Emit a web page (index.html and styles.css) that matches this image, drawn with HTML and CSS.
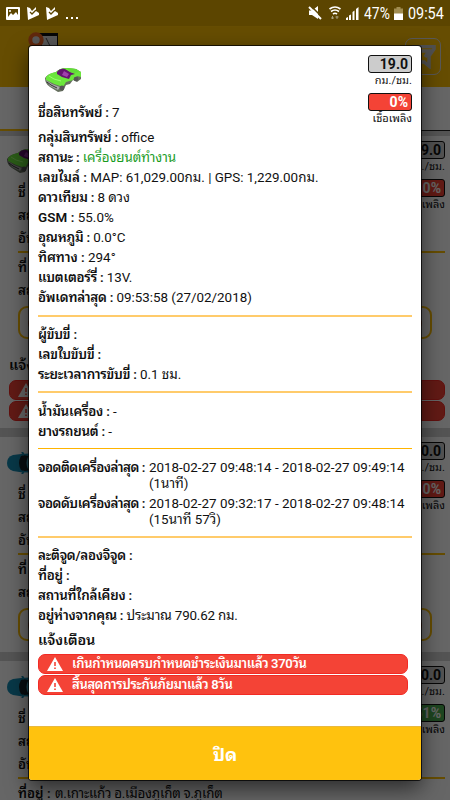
FILE: index.html
```
<!DOCTYPE html>
<html lang="th">
<head>
<meta charset="utf-8">
<title>รายละเอียดสินทรัพย์</title>
<link rel="stylesheet" href="styles.css">
</head>
<body>
<svg width="0" height="0" class="defs">
  <defs>
    <symbol id="warn" viewBox="0 0 16 14"><path d="M8 0 16 14H0Z" fill="#fff"/><path d="M7.2 5h1.6v4H7.2zM7.2 10.4h1.6V12H7.2z" fill="#f44336"/></symbol>
    <symbol id="green-car" viewBox="0 0 36 26">
      <path d="M0 11Q2 7 11 5 15 1 21 1L31 2 36 5V12L32 15 28 13 25 17 21 18 18 24 13 25 5 20Q0 17 0 11Z" fill="#66705f"/>
      <path d="M1 10Q4 6 11 5 15 1 22 1L31 2 36 5V10L32 9 28 13 21 15 18 20Q10 18 1 13Z" fill="#6be63c"/>
      <path d="M12 5Q15 1 20 2L25 5 30 7 26 8 24 12 17 10 12 7Z" fill="#651470"/>
      <path d="M22 1 31 2 34 5 29 6 25 5Z" fill="#62dc38"/>
      <path d="M19 4 24 7 22 10 17 8Z" fill="#a040ad"/>
      <path d="M1 13 7 17 15 20 13 23 5 19Z" fill="#aaa"/>
      <path d="M2 15 6 18 12 21" stroke="#333" fill="none"/>
      <circle cx="17" cy="21" r="2.400" fill="#555"/><circle cx="31" cy="12" r="2.300" fill="#555"/>
      <path d="M4 9 9 12 16 14" stroke="#9cff70" fill="none"/>
    </symbol>
    <symbol id="blue-car" viewBox="0 0 44 22">
      <path d="M6 3Q22 0 38 3 43 5 43 11T38 19Q22 22 6 19 0 17 0 11T6 3Z" fill="#168db5"/>
      <path d="M14 4Q19 2 22 5 18 11 22 18 18 20 14 18 10 11 14 4Z" fill="#18252b"/>
      <path d="M21 5H33V17H21Q18 11 21 5Z" fill="#54b9d5"/>
      <path d="M15 0l2 3M15 22l2-3" stroke="#168db5" stroke-width="2"/>
    </symbol>
  </defs>
</svg>
<div class="app">
  <header class="bar">
    <svg class="logo" width="32" height="30" viewBox="0 0 32 30"><rect x="10" y="1" width="20" height="29" fill="#111"/><rect x="14" y="4" width="15" height="20" fill="#ddd"/><path d="M18 6 22 14" stroke="#555"/><circle cx="8" cy="8" r="5.700" fill="#ddd" stroke="#f26522" stroke-width="4"/></svg>
    <div class="filter"><svg width="28" height="24" viewBox="0 0 28 24"><path d="M3 1.500H25V4L20 11V21L15 17H11V11L5 4M8 6H20L16 12" fill="none" stroke="#c9c9c9" stroke-width="3.500"/></svg></div>
  </header>
  <div class="tabs"><span class="on"></span><span></span></div>

  <section class="card first">
    <div class="stats"><b class="pill">9.0</b><i>./ชม.</i><b class="pill red">0%</b><i>เพลิง</i></div>
    <svg class="thumb" width="36" height="26"><use href="#green-car"/></svg>
    <p class="r1">ชื่</p><p>สถ</p><p>อัพ</p>
    <hr><p class="place">ที่</p><p>สถ</p>
    <div class="btn"><span></span><span></span></div>
    <h3>แจ้ง</h3>
    <div class="alert"><svg width="16" height="14"><use href="#warn"/></svg></div>
    <div class="alert"><svg width="16" height="14"><use href="#warn"/></svg></div>
  </section>
  <section class="card second">
    <div class="stats"><b class="pill">0.0</b><i>./ชม.</i><b class="pill red">0%</b><i>เพลิง</i></div>
    <svg class="thumb" width="44" height="22"><use href="#blue-car"/></svg>
    <p class="r1">ชื่</p><p>สถ</p><p>อัพ</p>
    <hr><p class="place">ที่</p><p>สถ</p>
    <div class="btn"><span></span><span></span></div>
  </section>
  <section class="card third">
    <div class="stats"><b class="pill">0.0</b><i>./ชม.</i><b class="pill green">51%</b><i>เพลิง</i></div>
    <svg class="thumb" width="44" height="22"><use href="#blue-car"/></svg>
    <p class="r1">ชื่</p><p>สถ</p><p>อัพ</p>
    <hr><p class="place">ที่อยู่ : <em>ต.เกาะแก้ว อ.เมืองภูเก็ต จ.ภูเก็ต</em></p>
  </section>
</div>

<div class="shade"></div>

<div class="status">
  <svg width="14" height="13" viewBox="0 0 14 13"><path fill-rule="evenodd" d="M1 0H13Q14 0 14 1V12Q14 13 13 13H1Q0 13 0 12V1Q0 0 1 0ZM2 2V10L5 6 7 8 10 5 12 8V2Z" fill="#fff"/><circle cx="4" cy="4" r="1" fill="#fff"/></svg>
  <svg width="12" height="13" viewBox="0 0 12 13"><path d="M0 0 3 1 5 4 9 0V4L12 6V8L1 13Z" fill="#fff"/><path d="M3 5 5 7 9 3" stroke="#5c4500" stroke-width="1.300" fill="none"/></svg>
  <svg width="12" height="13" viewBox="0 0 12 13"><path d="M0 0 3 1 5 4 9 0V4L12 6V8L1 13Z" fill="#fff"/><path d="M3 5 5 7 9 3" stroke="#5c4500" stroke-width="1.300" fill="none"/></svg>
  <svg class="dots" width="12" height="3" viewBox="0 0 12 3"><path d="M0 0h2v2H0zM5 0h2v2H5zM10 0h2v2h-2z" fill="#fff"/></svg>
  <span class="grow"></span>
  <svg class="mute" width="14" height="14" viewBox="0 0 14 14"><path d="M1 4.500H4L10 0V13L4 9H1Z" fill="#fff"/><path d="M3 0 13 10" stroke="#5c4500" stroke-width="1.500"/><path d="M1 1 13 13" stroke="#fff" stroke-width="2"/></svg>
  <svg class="wifi" width="12" height="14" viewBox="0 0 12 14"><g fill="none" stroke="#fff" stroke-width="1.700"><path d="M.5 3Q6-1 11.500 3M2 5.500Q6 2.500 10 5.500M4 8Q6 6.500 8 8"/></g><path d="M3.500 10v3M8 10v3M2 12h3M6.500 11h3" stroke="#a8a080"/></svg>
  <svg class="sig" width="13" height="13" viewBox="0 0 13 13"><path d="M0 13V11l2-1v3zM3 13V8.500l2-1V13zM6.500 13V5l2-1.500V13zM10 13V2l2.500-2V13z" fill="#fff"/></svg>
  <span class="pct">47%</span>
  <svg class="bat" width="9" height="13" viewBox="0 0 9 13"><path d="M2.500 0h4v1.500H9V7H0V1.500h2.500z" fill="#a08c50"/><path d="M0 6.500h9V13H0z" fill="#fff"/></svg>
  <span class="clock">09:54</span>
</div>

<main class="modal">
  <div class="content">
    <div class="stats"><b class="pill">19.0</b><i>กม./ชม.</i><b class="pill red">0%</b><i>เชื้อเพลิง</i></div>
    <svg class="car" width="36" height="26"><use href="#green-car"/></svg>
    <p class="name"><b>ชื่อสินทรัพย์ :</b> 7</p>
    <p><b>กลุ่มสินทรัพย์ :</b> office</p>
    <p><b>สถานะ :</b> <span class="ok">เครื่องยนต์ทำงาน</span></p>
    <p><b class="wide">เลขไมล์ :</b> MAP: 61,029.00กม. | GPS: 1,229.00กม.</p>
    <p><b>ดาวเทียม :</b> 8 ดวง</p>
    <p><b class="latin">GSM :</b> 55.0%</p>
    <p><b>อุณหภูมิ :</b> 0.0°C</p>
    <p><b class="wide">ทิศทาง :</b> 294°</p>
    <p><b>แบตเตอร์รี่ :</b> 13V.</p>
    <p><b>อัพเดทล่าสุด :</b> 09:53:58 (27/02/2018)</p>
    <hr class="l1">
    <p><b>ผู้ขับขี่ :</b></p>
    <p><b>เลขใบขับขี่ :</b></p>
    <p><b>ระยะเวลาการขับขี่ :</b> 0.1 ชม.</p>
    <hr class="l2">
    <p><b>น้ำมันเครื่อง :</b> -</p>
    <p><b>ยางรถยนต์ :</b> -</p>
    <hr class="l3">
    <div class="pair"><b>จอดติดเครื่องล่าสุด :</b><div>2018-02-27 09:48:14 - 2018-02-27 09:49:14<br>(1นาที)</div></div>
    <div class="pair"><b>จอดดับเครื่องล่าสุด :</b><div>2018-02-27 09:32:17 - 2018-02-27 09:48:14<br>(15นาที 57วิ)</div></div>
    <hr class="l4">
    <p><b>ละติจูด/ลองจิจูด :</b></p>
    <p><b>ที่อยู่ :</b></p>
    <p><b>สถานที่ใกล้เคียง :</b></p>
    <p><b>อยู่ห่างจากคุณ :</b> <span class="dist">ประมาณ 790.62 กม.</span></p>
    <h3>แจ้งเตือน</h3>
    <div class="alert"><svg width="16" height="14"><use href="#warn"/></svg><span>เกินกำหนดครบกำหนดชำระเงินมาแล้ว 370วัน</span></div>
    <div class="alert"><svg width="16" height="14"><use href="#warn"/></svg><span>สิ้นสุดการประกันภัยมาแล้ว 8วัน</span></div>
  </div>
  <div class="close">ปิด</div>
</main>
</body>
</html>
```
FILE: styles.css
```
* { box-sizing: border-box; }
body { margin: 0; width: 450px; height: 800px; overflow: hidden; position: relative; background: #d2d2d2; color: #111; font: 13.4px/20px Roboto, "Noto Sans Thai Looped", "Noto Sans Thai", "Noto Sans", sans-serif; }
p, h3 { margin: 0; white-space: nowrap; }
i, em { font-style: normal; }
b { font-weight: 600; letter-spacing: -.25px; }
.latin { letter-spacing: .1px; }
.wide { letter-spacing: 0; }
.dist { letter-spacing: -.2px; }
hr { border: 0; margin: 0; height: 2px; background: #ffcb6b; }
.defs { position: absolute; }

.app { height: 800px; overflow: hidden; }
.bar { height: 87px; padding: 32px 9px 0 28px; background: #ffc107; display: flex; justify-content: space-between; }
.filter { width: 36px; height: 37px; margin-top: 6px; padding: 6px 3px; border: 1px solid #ddd; border-radius: 7px; }
.tabs { height: 44px; background: #fff; display: flex; }
.tabs span { flex: 1; border-bottom: 1px solid #222; }
.tabs .on { border-bottom: 2px solid #ffc107; }

.card { background: #fff; padding: 5px 5px 0 18px; }
.card p { height: 23px; line-height: 23px; font-weight: 600; }
.card em { font-weight: 400; margin-left: 1px; letter-spacing: -.25px; }
.first { margin-top: 5px; height: 292px; }
.second { margin-top: 9px; height: 215px; }
.third { margin-top: 9px; height: 150px; }
.card .stats { height: 75px; }
.thumb { display: block; margin: -68px 0 0 -11px; }
.second .thumb, .third .thumb { margin-top: -65px; }
.card .r1 { margin-top: 7px; }
.second .r1, .third .r1 { margin-top: 9px; }
.card hr { margin-top: 1px; height: 1.5px; background: #ffc107; }
.card .place { margin-top: 3px; }
.btn { width: 414px; height: 33px; margin-top: 4px; padding: 8px 8px; border: 2px solid #ffc107; border-radius: 9px; display: flex; justify-content: space-between; }
.btn span { width: 15px; height: 15px; border-radius: 50%; background: #f26522; }
.card h3 { margin: 16px 0 3px -9px; }
.card .alert { margin-left: -9px; width: 436px; }

.stats { display: flex; flex-direction: column; align-items: flex-end; }
.pill { width: 44px; height: 18px; padding-right: 3px; border: 1px solid #111; border-radius: 3px; background: #ccc; color: #111; font-size: 14px; font-weight: 700; letter-spacing: 0; line-height: 17px; text-align: right; }
.stats i { height: 20px; font-size: 11px; line-height: 16px; }
.red { background: #f44336; color: #fff; }
.green { background: #4caf50; color: #fff; }

h3 { font-size: 14.5px; font-weight: 600; letter-spacing: -.1px; line-height: 22px; }
.alert { height: 20px; margin-bottom: 1.5px; padding-left: 8px; border: 1px solid #f22a24; border-radius: 7px; background: #f44336; color: #fff; display: flex; align-items: center; gap: 9px; font-size: 13px; font-weight: 600; letter-spacing: -.33px; line-height: 18px; white-space: nowrap; }

.shade { position: absolute; inset: 0; background: rgba(0, 0, 0, .6); }

.status { position: absolute; inset: 0 0 auto; height: 26px; padding: 0 6px 0 6px; background: #5c4500; color: #fff; display: flex; align-items: center; font-size: 16px; }
.status svg + svg { margin-left: 7px; }
.status .dots { margin: 11px 0 0 8px; }
.grow { flex: 1; }
.status .wifi { margin-left: 7px; }
.status .sig { margin-left: 5px; }
.pct { width: 27px; margin: 2px 3px 0 5px; transform: scaleX(.87); transform-origin: left; }
.clock { width: 36px; margin: 2px 0 0 5px; transform: scaleX(.87); transform-origin: left; font-size: 16.500px; }

.modal { position: absolute; left: 29px; top: 46px; width: 392px; height: 734px; border-radius: 3px; overflow: hidden; background: #fff; box-shadow: 0 0 0 1px rgba(0, 0, 0, .75), 0 8px 22px rgba(0, 0, 0, .6); }
.content { height: 680px; padding: 9px 9px 0; }
.modal .stats { height: 76px; }
.car { display: block; margin: -64px 0 0 7px; }
.modal p { height: 20px; }
.modal .name { margin: 10px 0 5px; }
.ok { color: #1a9c1f; letter-spacing: -.1px; }
.l1 { margin: 7px 0 8px; }
.l2 { margin: 6px 0 9px; }
.l3 { margin: 6px 0 11px; height: 1px; background: #ffb400; }
.pair { display: grid; grid-template-columns: 111px 1fr; height: 36px; line-height: 16px; white-space: nowrap; }
.pair b { letter-spacing: -.5px; }
.l4 { margin: 4px 0 8px; }
.modal h3 { margin: 3.5px 0 2px; }
.modal .alert { width: 370px; }
.close { height: 54px; border-top: 1px solid #e9b93e; background: #ffc20e; color: #fff; text-align: center; font-size: 18px; font-weight: 700; line-height: 55px; }
```
